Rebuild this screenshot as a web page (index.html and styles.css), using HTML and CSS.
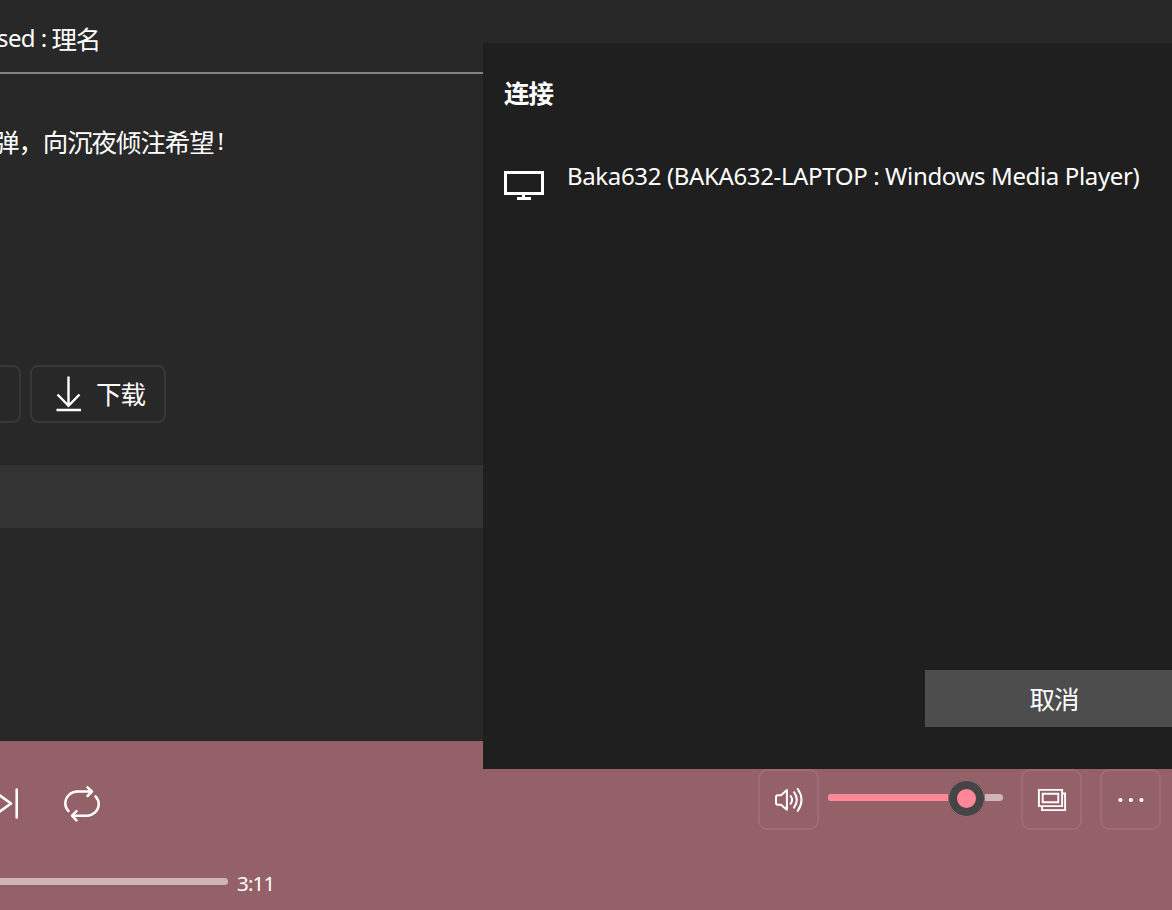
FILE: index.html
```html
<!DOCTYPE html>
<html lang="zh-CN">
<head>
<meta charset="utf-8">
<title>连接</title>
<link rel="stylesheet" href="styles.css">
</head>
<body>
<div class="app">
  <main class="content">
    <div class="artist"><span class="artist-latin">sed :</span><span class="cjk">理名</span></div>
    <div class="description"><span class="cjk">弹，向沉夜倾注希望</span><span class="bang">!</span></div>
    <div class="actions">
      <div class="action action-cut"></div>
      <div class="action action-download">
        <svg class="download-icon" width="26" height="36" viewBox="0 0 26 36" fill="none" stroke="#fff" stroke-width="2.4"><path d="M12.5 0.5V30M1.5 18.5L12.5 29.8L23.5 18.5M0.5 34H25"/></svg>
        <span class="cjk">下载</span>
      </div>
    </div>
    <div class="track-row"></div>
  </main>
  <footer class="player">
    <div class="transport">
      <svg class="next-icon" width="20" height="32" viewBox="0 0 20 32" fill="none" stroke="#fff" stroke-width="2.6" stroke-linecap="round" stroke-linejoin="round"><path d="M-3 5.5L11 15.5L-3 25.5M16.7 1.5V29.5"/></svg>
      <svg class="repeat-icon" width="36" height="36" viewBox="0 0 36 36" fill="none" stroke="#fff" stroke-width="2.5" stroke-linecap="round" stroke-linejoin="round"><path d="M4.5 25.2C2.5 23 1.3 20.5 1.3 17.5C1.3 10.5 7 5.5 13.5 5.5H28M23.5 1.3L28 5.5L23.5 10M31.5 10.3C33.5 12.5 34.7 15 34.7 18C34.7 24.7 29.2 29.7 22.5 29.7H8M12.5 25.2L8 29.7L12.5 34.3"/></svg>
    </div>
    <div class="controls">
      <div class="tile">
        <svg width="30" height="26" viewBox="0 0 30 26" fill="none" stroke="#fff" stroke-width="2" stroke-linecap="round" stroke-linejoin="round"><path d="M2 10.2Q2 8.2 4 8.2H7L12.9 3V22.8L7 17.7H4Q2 17.7 2 15.7ZM16.6 9Q19.6 12.9 16.6 16.8M20 5.2Q25.6 12.9 20 20.6M23.6 1.8Q31.4 12.9 23.6 24"/></svg>
      </div>
      <div class="volume"><div class="volume-level"></div><div class="volume-thumb"></div></div>
      <div class="tile tile-cast">
        <svg width="28" height="22" viewBox="0 0 28 22" fill="none" stroke="#fff" stroke-width="1.9"><path d="M0.9 0.9H24.1V17.1H0.9ZM4.7 4.7H20.3V13.3H4.7ZM24 4.5H27.1V21.1H4V17"/></svg>
      </div>
      <div class="tile tile-more">
        <svg width="26" height="6" viewBox="0 0 26 6" fill="#fff"><circle cx="2.4" cy="3" r="2.1"/><circle cx="12.9" cy="3" r="2.1"/><circle cx="23.4" cy="3" r="2.1"/></svg>
      </div>
    </div>
    <div class="timeline"><div class="timeline-bar"></div><span class="duration">3:11</span></div>
  </footer>
  <section class="dialog">
    <h1 class="dialog-title">连接</h1>
    <div class="device">
      <svg class="device-icon" width="40" height="31" viewBox="0 0 40 31" fill="none" stroke="#fff"><path stroke-width="3" d="M1.5 1.5H38.5V22.5H1.5Z"/><path stroke-width="3" d="M19.5 23V28M13 27.5H27"/></svg>
      <span class="device-name">Baka632 (BAKA632-LAPTOP : Windows Media Player)</span>
    </div>
    <button class="cancel">取消</button>
  </section>
</div>
</body>
</html>
```
FILE: styles.css
```css
* { box-sizing: border-box; }
body { margin: 0; background: #282828; color: #fff; font-family: "Noto Sans", "Noto Sans CJK SC", sans-serif; font-size: 24px; overflow: hidden; }
svg { display: block; flex: none; overflow: visible; }
.app { position: relative; width: 1172px; height: 910px; display: flex; flex-direction: column; overflow: hidden; }
.content { height: 741px; background: #282828; }
.cjk { font-family: "Noto Sans CJK SC", sans-serif; font-size: 25.5px; letter-spacing: -1.1px; }
.artist { height: 74px; border-bottom: 2px solid #828282; display: flex; gap: 5px; line-height: 36px; padding-top: 20px; margin-left: -3px; white-space: nowrap; }
.artist-latin { letter-spacing: -0.6px; }
.description { height: 291px; padding-top: 49px; margin-left: -6px; line-height: 36px; display: flex; white-space: nowrap; }
.bang { margin-left: 4px; }
.actions { display: flex; gap: 9px; height: 58px; }
.action { border: 2px solid #383838; border-radius: 8px; height: 58px; display: flex; align-items: center; }
.action-cut { width: 21px; border-left: 0; border-radius: 0 8px 8px 0; }
.action-download { width: 136px; padding-left: 24px; gap: 14px; line-height: 36px; }
.action-download .cjk { margin-top: -2px; }
.track-row { height: 63px; margin-top: 42px; background: #333; }
.player { height: 169px; background: #946169; display: grid; grid-template-columns: 758px 1fr; grid-template-rows: 128px 41px; }
.transport { display: flex; padding-top: 45px; gap: 43.5px; }
.next-icon { margin-top: 2px; }
.controls { display: flex; padding-top: 28px; }
.tile { width: 61px; height: 61px; flex: none; border: 2px solid #9e6c74; border-radius: 9px; display: flex; align-items: center; justify-content: center; }
.volume { position: relative; width: 175px; height: 7px; margin: 25px 18px 0 9px; border-radius: 4px; background: #cdb5b8; }
.volume-level { width: 138px; height: 7px; border-radius: 4px; background: #ff8798; }
.volume-thumb { position: absolute; left: 120px; top: -14px; width: 37px; height: 37px; border-radius: 50%; border: 9px solid #454545; background: #ff8798; outline: 1px solid #a17179; outline-offset: -1px; }
.tile-more { margin-left: 18px; }
.timeline { grid-column: 1 / 3; display: flex; gap: 9px; }
.timeline-bar { width: 228px; height: 7px; margin-top: 9px; border-radius: 0 4px 4px 0; background: #cdb5b8; }
.duration { font-size: 20.5px; line-height: 28px; letter-spacing: -0.8px; }
.dialog { position: absolute; left: 483px; top: 43px; width: 689px; height: 726px; background: #1f1f1f; display: flex; flex-direction: column; padding: 31px 0 42px 21px; }
.dialog-title { margin: 0; font: 700 25.5px/36px "Noto Sans CJK SC", sans-serif; letter-spacing: -1.1px; }
.device { display: flex; gap: 23px; margin-top: 48px; }
.device-icon { margin-top: 13px; }
.device-name { font-size: 24px; line-height: 36px; letter-spacing: -0.36px; white-space: nowrap; }
.cancel { width: 247px; height: 57px; margin: auto 0 0 auto; padding: 0 0 2px 11px; border: 0; background: #4d4d4d; color: #fff; font: 25.5px/55px "Noto Sans CJK SC", sans-serif; letter-spacing: -1.1px; }
```
